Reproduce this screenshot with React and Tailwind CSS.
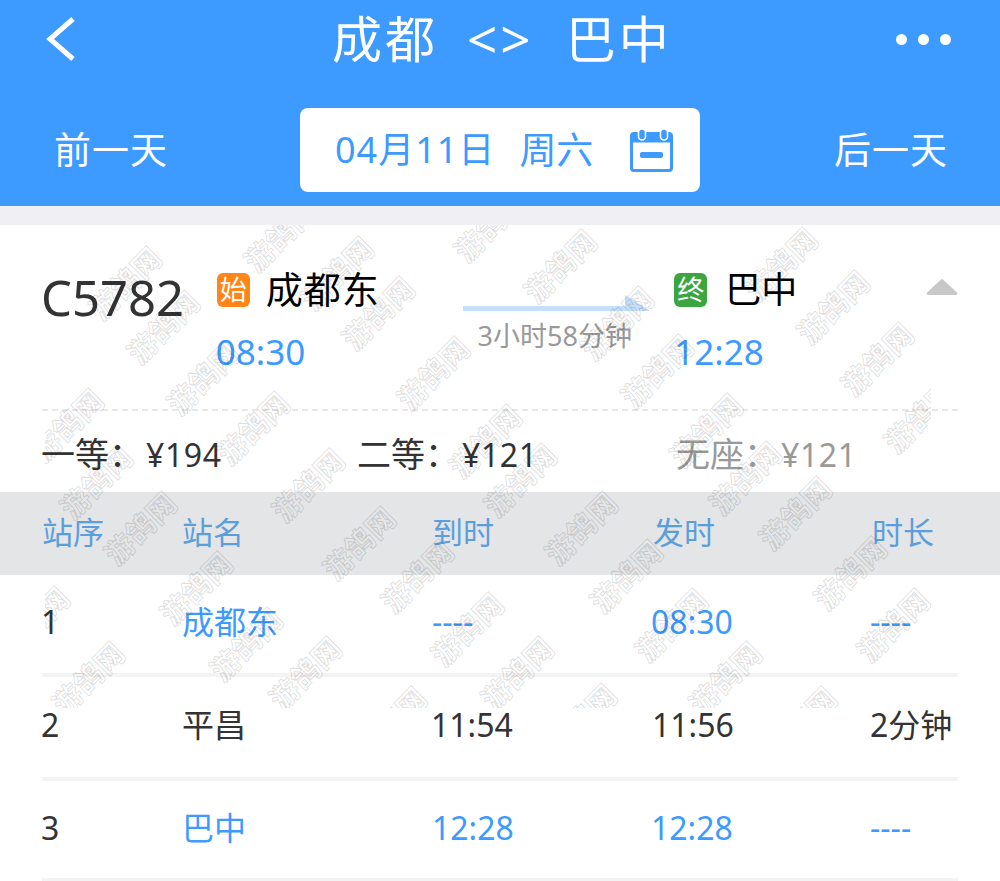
const marks = [
  [280, 235], [490, 225], [125, 283], [163, 327], [337, 273], [378, 313], [560, 266], [617, 323],
  [781, 264], [833, 307], [203, 378], [433, 373], [657, 371], [877, 359], [67, 425], [253, 428],
  [485, 441], [706, 430], [920, 416], [96, 482], [308, 485], [520, 480], [745, 478], [140, 528],
  [359, 543], [581, 528], [795, 513], [196, 588], [417, 576], [626, 576], [850, 573], [33, 623],
  [246, 644], [467, 629], [671, 625], [893, 625], [88, 678], [305, 673], [517, 673], [725, 678],
  [390, 723], [580, 720], [800, 723],
]

const stops = [
  { no: '1', name: '成都东', arrive: '----', leave: '08:30', stay: '----', blue: true, height: 'h-[102px]' },
  { no: '2', name: '平昌', arrive: '11:54', leave: '11:56', stay: '2分钟', blue: false, height: 'h-[104px]' },
  { no: '3', name: '巴中', arrive: '12:28', leave: '12:28', stay: '----', blue: true, height: 'h-[101px]' },
]

function CalendarIcon() {
  return (
    <svg viewBox="0 0 43 43" className="w-[43px] h-[43px]">
      <rect x="1.5" y="4.5" width="40" height="37" rx="2.5" fill="none" stroke="#3d9aff" strokeWidth="3" />
      <rect x="1.5" y="4.5" width="40" height="9" fill="#3d9aff" />
      <rect x="8.5" y="0" width="7" height="11" rx="3.5" fill="#3d9aff" stroke="#fff" strokeWidth="1.5" />
      <rect x="30.5" y="0" width="7" height="11" rx="3.5" fill="#3d9aff" stroke="#fff" strokeWidth="1.5" />
      <rect x="10" y="23" width="23" height="6" rx="2" fill="#3d9aff" />
    </svg>
  )
}

function Price({ label, value, className }) {
  return (
    <div className={className}>
      <span className="text-[34px]">{label}</span>
      <span className="text-[32px] ml-[3px] tracking-[0.6px]">{value}</span>
    </div>
  )
}

export default function App() {
  return (
    <div className="relative w-[1000px] h-[881px] overflow-hidden bg-white font-['Noto_Sans','Noto_Sans_CJK_SC',sans-serif]">
      <header className="h-[206px] bg-[#3d9aff] text-white">
        <div className="h-[108px] flex items-start pl-[46px] pr-[49px] pt-[17px]">
          <svg viewBox="0 0 30 44" className="w-[30px] h-[44px]">
            <path d="M27 2 L4 22 L27 42" fill="none" stroke="#fff" strokeWidth="5" />
          </svg>
          <div className="ml-[256px] flex items-center gap-[32px] h-[44px] text-[50px] tracking-[3px] whitespace-nowrap">
            <span>成都</span>
            <span className="-ml-[3px] text-[53px]">&lt;&gt;</span>
            <span>巴中</span>
          </div>
          <div className="ml-auto flex items-center gap-[11px] h-[44px]">
            <span className="w-[11px] h-[11px] rounded-full bg-white" />
            <span className="w-[11px] h-[11px] rounded-full bg-white" />
            <span className="w-[11px] h-[11px] rounded-full bg-white" />
          </div>
        </div>
        <div className="flex items-start pl-[54px]">
          <div className="w-[246px] h-[84px] flex items-center text-[37px] tracking-[1px]">前一天</div>
          <div className="w-[400px] h-[84px] rounded-lg bg-white flex items-center pl-[35px] text-[#3d9aff] whitespace-nowrap">
            <div className="w-[295px] flex items-center">
              <span className="text-[36px] tracking-[1px]">04月11日</span>
              <span className="ml-[24px] text-[37px]">周六</span>
            </div>
            <CalendarIcon />
          </div>
          <div className="ml-[134px] h-[84px] flex items-center text-[37px] tracking-[1px] whitespace-nowrap">后一天</div>
        </div>
      </header>
      <div className="h-[19px] bg-[#efeff4]" />

      <section className="mx-[42px] h-[186px] pt-[47px] flex items-start border-b-2 border-dashed border-[#e8e8e8]">
        <div className="w-[175px] -ml-[1px] mr-[1px] text-[49px] leading-[50px] text-[#333]">C5782</div>
        <div className="w-[246px]">
          <div className="flex items-center h-[36px]">
            <span className="w-[33px] h-[34px] rounded-md bg-[#ff8516] text-white text-[27px] leading-[34px] text-center">始</span>
            <span className="ml-[16px] text-[37px] text-black tracking-[1px]">成都东</span>
          </div>
          <div className="mt-[26px] -ml-[1px] text-[35px] leading-[36px] text-[#3d9aff]">08:30</div>
        </div>
        <div className="w-[212px] pt-[23px]">
          <svg viewBox="0 0 187 16" className="w-[187px] h-[16px]">
            <path d="M0 11 H162 V0 L187 16 H0 Z" fill="#c5e0fb" />
          </svg>
          <div className="ml-[15px] mt-[7px] text-[27px] leading-[36px] text-[#999] whitespace-nowrap">3小时58分钟</div>
        </div>
        <div className="w-[252px]">
          <div className="flex items-center h-[36px]">
            <span className="w-[33px] h-[34px] rounded-md bg-[#3ba53f] text-white text-[27px] leading-[34px] text-center">终</span>
            <span className="ml-[18px] text-[36px] text-black">巴中</span>
          </div>
          <div className="mt-[26px] text-[35px] leading-[36px] text-[#3d9aff]">12:28</div>
        </div>
        <svg viewBox="0 0 32 18" className="w-[32px] h-[18px] mt-[6px]">
          <path d="M16 2 L30 15 Q31 16 29 16 H3 Q1 16 2 15 Z" fill="#c8c8c8" stroke="#c8c8c8" strokeWidth="2" strokeLinejoin="round" />
        </svg>
      </section>

      <div className="h-[81px] pl-[41px] pt-[5px] flex items-center whitespace-nowrap">
        <Price label="一等：" value="¥194" className="w-[316px] text-[#333]" />
        <Price label="二等：" value="¥121" className="w-[319px] text-[#333]" />
        <Price label="无座：" value="¥121" className="text-[#999]" />
      </div>

      <div className="h-[83px] pb-[2px] bg-[#e4e5e7] pl-[42px] grid grid-cols-[140px_250px_221px_219px_1fr] items-center text-[31px] text-[#5a9fdc]">
        <div>站序</div>
        <div>站名</div>
        <div>到时</div>
        <div>发时</div>
        <div>时长</div>
      </div>

      {stops.map((s) => (
        <div key={s.no} className={`${s.height} mx-[42px] pb-[4px] border-b-4 border-[#f3f3f3] grid grid-cols-[140px_250px_221px_219px_1fr] items-center text-[32px] text-[#333] whitespace-nowrap`}>
          <div className="-ml-[1px]">{s.no}</div>
          <div className={s.blue ? 'text-[#3d9aff]' : ''}>{s.name}</div>
          <div className={s.blue ? 'text-[#3d9aff]' : '-ml-[1px]'}>{s.arrive}</div>
          <div className={s.blue ? '-ml-[2px] text-[#3d9aff]' : '-ml-[1px]'}>{s.leave}</div>
          <div className={s.stay === '----' ? '-ml-[2px] text-[#3d9aff]' : '-ml-[2px]'}>{s.stay}</div>
        </div>
      ))}

      {/* watermark layer, offset by its own left/top */}
      <div className="absolute left-[45px] top-[225px] w-[886px] h-[483px] overflow-hidden pointer-events-none">
        {marks.map(([x, y]) => (
          <span
            key={`${x}-${y}`}
            className="absolute -translate-x-1/2 -translate-y-1/2 -rotate-45 whitespace-nowrap text-[29px] leading-none font-bold text-transparent [-webkit-text-stroke:1px_rgba(0,0,0,0.14)]"
            style={{ left: x - 45, top: y - 225 }}
          >
            游鸽网
          </span>
        ))}
      </div>
    </div>
  )
}
